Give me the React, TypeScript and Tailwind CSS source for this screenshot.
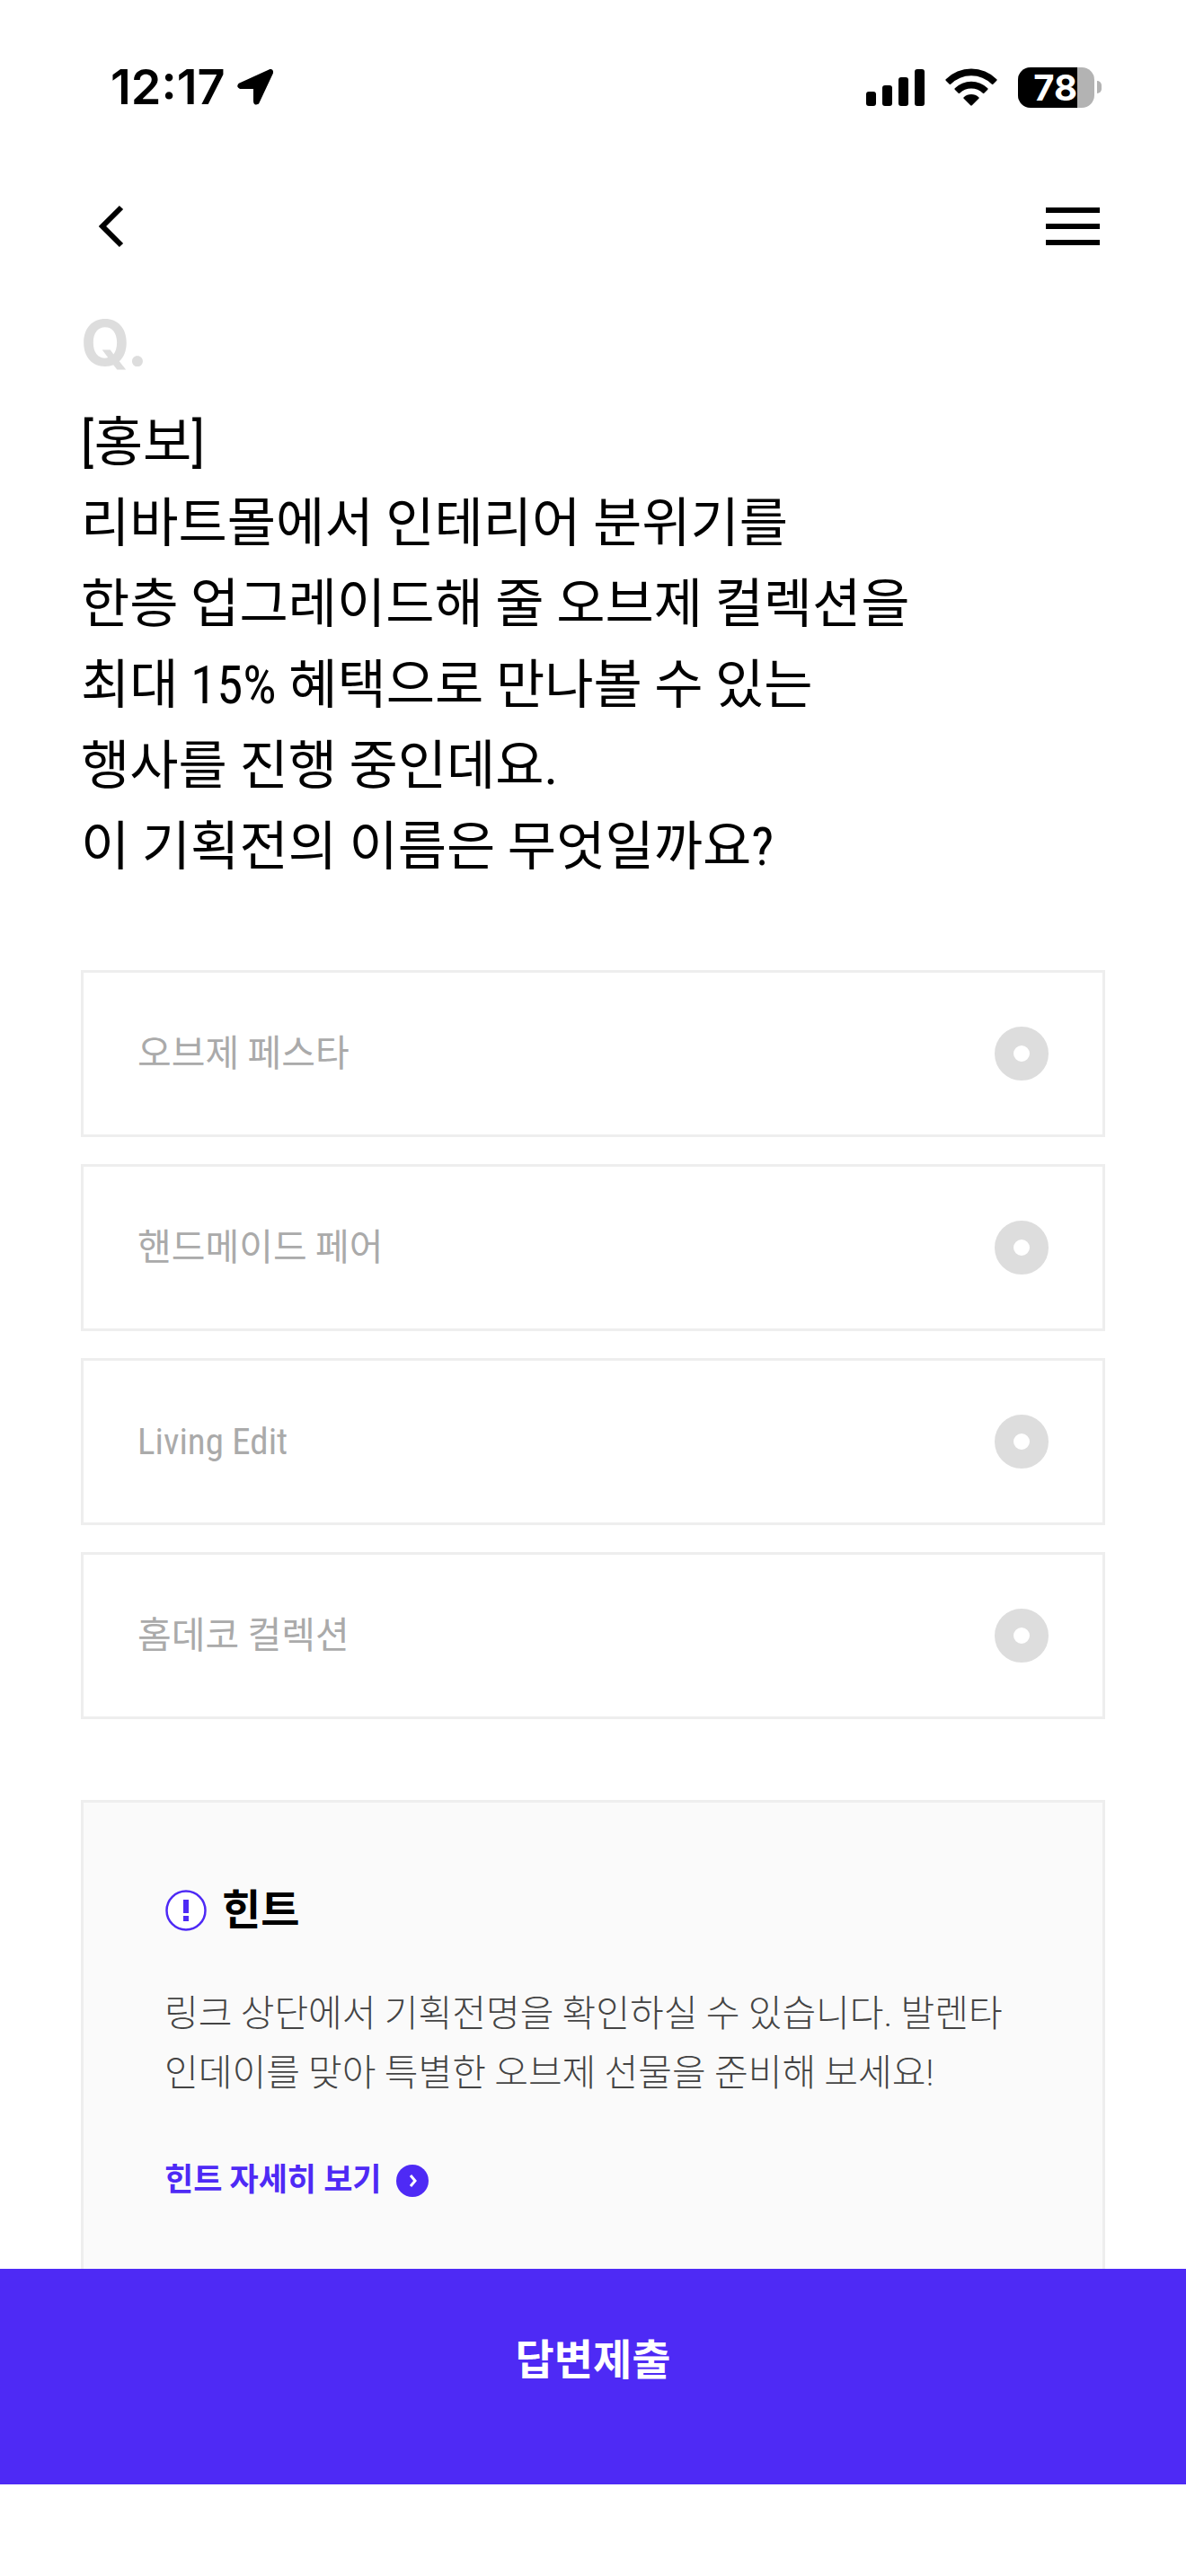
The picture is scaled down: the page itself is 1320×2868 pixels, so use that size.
import { useState } from "react"

const OPTIONS = ["오브제 페스타", "핸드메이드 페어", "Living Edit", "홈데코 컬렉션"]

const QUESTION = [
  "[홍보]",
  "리바트몰에서 인테리어 분위기를",
  "한층 업그레이드해 줄 오브제 컬렉션을",
  "최대 15% 혜택으로 만나볼 수 있는",
  "행사를 진행 중인데요.",
  "이 기획전의 이름은 무엇일까요?",
]

function LocationIcon() {
  return (
    <svg width="42" height="42" viewBox="0 0 42 42" aria-hidden="true">
      <path
        d="M3.500 18.200 37.500 2.500Q40 2 39.500 5L23.800 38.500Q20.500 40 20.500 36.800V22.500a1 1 0 0 0-1-1H4.500Q1.500 20.500 3.500 18.200Z"
        stroke="#000"
        strokeWidth="3"
        strokeLinejoin="round"
      />
    </svg>
  )
}

function SignalIcon() {
  return (
    <svg width="65" height="41" viewBox="0 0 65 41" aria-hidden="true">
      <rect x="0" y="25" width="11" height="16" rx="3" />
      <rect x="18" y="18" width="11" height="23" rx="3" />
      <rect x="36" y="9" width="11" height="32" rx="3" />
      <rect x="54" y="0" width="11" height="41" rx="3" />
    </svg>
  )
}

function WifiIcon() {
  return (
    <svg width="58" height="42" viewBox="0 0 58 42" aria-hidden="true">
      <path d="M.7 13.700a1 1 0 0 1 0-1.400 40 40 0 0 1 56.600 0 1 1 0 0 1 0 1.400l-4 4a1 1 0 0 1-1.400 0 32.400 32.400 0 0 0-45.800 0 1 1 0 0 1-1.400 0Z" />
      <path d="M10.700 23.700a1 1 0 0 1 0-1.400 26 26 0 0 1 36.600 0 1 1 0 0 1 0 1.400l-4 4a1 1 0 0 1-1.400 0 18.300 18.300 0 0 0-25.800 0 1 1 0 0 1-1.400 0Z" />
      <path d="M20.700 33.700a1 1 0 0 1 0-1.500 12.200 12.200 0 0 1 16.600 0 1 1 0 0 1 0 1.500l-7.500 7.600a1.100 1.100 0 0 1-1.600 0Z" />
    </svg>
  )
}

function Battery() {
  return (
    <div className="flex items-center gap-[3px]">
      <div className="flex h-[45px] w-[85px] rounded-[14px] bg-[#b3b3b3]">
        <div className="flex w-[66px] items-center justify-end rounded-l-[14px] bg-black font-[Inter,sans-serif] text-[40px] font-bold leading-[45px] text-white">
          78
        </div>
      </div>
      <div className="h-[14px] w-[5px] rounded-r-full bg-[#b3b3b3]" />
    </div>
  )
}

function StatusBar() {
  return (
    <div className="flex h-[194px] shrink-0 items-center justify-between pl-[123px] pr-[94px]">
      <div className="flex items-center gap-3">
        <span className="font-[Inter,sans-serif] text-[54px] font-semibold leading-[60px]">12:17</span>
        <LocationIcon />
      </div>
      <div className="flex items-center gap-[23px]">
        <SignalIcon />
        <WifiIcon />
        <Battery />
      </div>
    </div>
  )
}

function Header() {
  return (
    <header className="flex h-[116px] shrink-0 items-center justify-between px-24">
      <button type="button" aria-label="뒤로" className="flex h-[60px] w-[60px] items-center justify-center">
        <svg width="60" height="60" viewBox="0 0 60 60" fill="none" aria-hidden="true">
          <path d="M39 9 18 30l21 21" stroke="#000" strokeWidth="6" />
        </svg>
      </button>
      <button type="button" aria-label="메뉴" className="flex w-[60px] flex-col gap-3">
        <span className="h-[6px] bg-black" />
        <span className="h-[6px] bg-black" />
        <span className="h-[6px] bg-black" />
      </button>
    </header>
  )
}

interface OptionProps {
  label: string
  checked: boolean
  onSelect: () => void
}

function Option({ label, checked, onSelect }: OptionProps) {
  return (
    <label className="flex h-[186px] cursor-pointer items-center justify-between border-[3px] border-[#eee] px-[60px] text-[41px] leading-[60px] text-[#aaa]">
      {label}
      <input
        type="radio"
        name="answer"
        value={label}
        checked={checked}
        onChange={onSelect}
        className="h-[60px] w-[60px] shrink-0 appearance-none rounded-full border-[21px] border-[#ddd] bg-white checked:border-[#4e2af5]"
      />
    </label>
  )
}

function Hint() {
  return (
    <section className="mt-[90px] border-[3px] border-[#eee] bg-[#fafafa] px-[90px] pb-[87px] pt-[90px]">
      <h2 className="flex items-center gap-4 text-[47px] font-bold leading-[60px]">
        <svg width="48" height="46" viewBox="0 0 48 46" aria-hidden="true">
          <circle cx="24" cy="23" r="21.500" fill="#fff" stroke="#4e2af5" strokeWidth="2.500" />
          <path d="M21 11h6v15h-6zM21 29h6v6h-6z" fill="#4e2af5" />
        </svg>
        힌트
      </h2>
      <p className="mt-[52px] text-[41px] font-light leading-[66px] text-[#444]">
        링크 상단에서 기획전명을 확인하실 수 있습니다. 발렌타
        <br />
        인데이를 맞아 특별한 오브제 선물을 준비해 보세요!
      </p>
      <a
        href="#hint"
        className="mt-[60px] inline-flex items-center gap-4 text-[35px] font-bold leading-[54px] text-[#4e2af5]"
      >
        힌트 자세히 보기
        <svg width="36" height="36" viewBox="0 0 36 36" fill="none" aria-hidden="true">
          <circle cx="18" cy="18" r="18" fill="#4e2af5" />
          <path d="m16 12 5 6-5 6" stroke="#fff" strokeWidth="3" />
        </svg>
      </a>
    </section>
  )
}

export default function App() {
  const [answer, setAnswer] = useState("")

  return (
    <div className="flex h-screen flex-col bg-white font-['Roboto_Condensed','Noto_Sans_CJK_KR',sans-serif] text-black">
      <StatusBar />
      <Header />
      <main className="min-h-0 flex-1 overflow-y-auto px-[90px] pt-9 [scrollbar-width:none]">
        <p className="font-[Inter,sans-serif] text-[70px] font-bold leading-[72px] text-[#ddd]">Q.</p>
        <h1 className="mt-[30px] text-[59px] font-normal leading-[90px]">
          {QUESTION.map((line) => (
            <span key={line} className="block">
              {line}
            </span>
          ))}
        </h1>
        <div role="radiogroup" aria-label="답변" className="mt-[92px] flex flex-col gap-[30px]">
          {OPTIONS.map((label) => (
            <Option key={label} label={label} checked={answer === label} onSelect={() => setAnswer(label)} />
          ))}
        </div>
        <Hint />
      </main>
      <footer className="shrink-0 pb-[102px]">
        <button
          type="button"
          className="flex h-[240px] w-full items-center justify-center bg-[#4e2af5] pb-9 text-[47px] font-bold leading-[60px] text-white"
        >
          답변제출
        </button>
      </footer>
    </div>
  )
}
